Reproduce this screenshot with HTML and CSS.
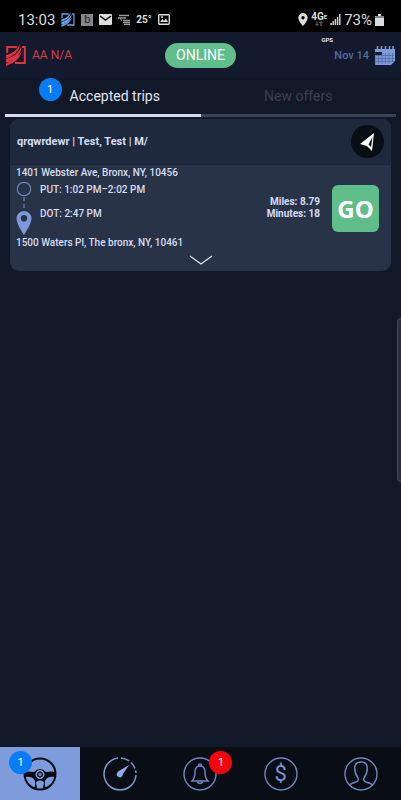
FILE: index.html
```html
<!DOCTYPE html>
<html lang="en">
<head>
<meta charset="utf-8">
<meta name="viewport" content="width=device-width, initial-scale=1">
<title>Accepted trips</title>
<link rel="stylesheet" href="styles.css">
</head>
<body>
<svg class="defs" aria-hidden="true">
  <symbol id="logo" viewBox="0 0 20 22">
    <path d="M1.200 9V3H11M16 3H18.800V19H9" fill="none" stroke="currentColor" stroke-width="2"/>
    <path d="M0 11Q10 9 14 0Q14 8 4 13Q2 14 0 14ZM0 15Q11 12 15.500 3Q15 13 3 18L0 18.500ZM0 22V19.500Q11 15 15.500 8Q14 17 0 22Z" fill="currentColor"/>
  </symbol>
</svg>
<div class="app">
  <div class="status">
    <div class="status-group">
      <span class="clock">13:03</span>
      <svg class="status-logo" viewBox="0 0 20 22"><use href="#logo"/></svg>
      <span class="app-b">b</span>
      <svg width="13" height="11" viewBox="0 0 13 11"><rect width="13" height="11" rx="1" fill="#ddd"/><path d="M1 2L6.500 6L12 2" fill="none" stroke="#111" stroke-width="1.500"/></svg>
      <svg width="12" height="11" viewBox="0 0 12 11"><path d="M1 1.500H11M0 4H8M5 6.500H12M5 8.500H12M6 10.500H12" fill="none" stroke="#999" stroke-width="1.400"/><path d="M2 4L4 7" stroke="#999"/></svg>
      <span class="temp">25°</span>
      <svg width="12" height="11" viewBox="0 0 12 11"><rect x=".7" y=".7" width="10.600" height="9.600" rx="1" fill="none" stroke="#ddd" stroke-width="1.400"/><path d="M2 8L4.500 5L6 7L8 4.500L10 8Z" fill="#ddd"/><circle cx="4" cy="3" r="1" fill="#ddd"/></svg>
    </div>
    <div class="status-group right">
      <svg width="10" height="13" viewBox="0 0 10 13"><path d="M5 0A4.700 4.700 0 0 0 .3 4.700C.3 8 5 13 5 13S9.700 8 9.700 4.700A4.700 4.700 0 0 0 5 0ZM5 3A1.700 1.700 0 1 1 5 6.400A1.700 1.700 0 0 1 5 3Z" fill="#ddd" fill-rule="evenodd"/></svg>
      <span class="network"><span>4G<small>E</small></span><svg width="8" height="5" viewBox="0 0 8 5"><path d="M2 0V4M.5 3L2 4.500L3.500 3M6 5V1M4.500 2L6 .5L7.500 2" fill="none" stroke="#777"/></svg></span>
      <svg width="11" height="11" viewBox="0 0 11 11"><path d="M1 9V11M3.200 7V11M5.400 5V11M7.600 3V11M9.800 0V11" stroke="#ccc" stroke-width="1.500"/></svg>
      <span class="battery">73%</span>
      <svg width="9" height="12" viewBox="0 0 9 12"><path d="M3 0H6V2H9V12H0V2H3Z" fill="#ddd"/><path d="M0 2H9V4H0Z" fill="#888"/></svg>
    </div>
  </div>
  <header class="header">
    <div class="brand"><svg class="brand-logo" viewBox="0 0 20 22"><use href="#logo"/></svg><span>AA N/A</span></div>
    <button class="online">ONLINE</button>
    <button class="date"><span>Nov 14</span>
      <svg width="20" height="19" viewBox="0 0 20 19"><path d="M0 3H20V6H0Z" fill="#7d9bdb"/><path d="M2.500 0V5M6.500 0V5M10.500 0V5M14.500 0V5M18 0V5" stroke="#7d9bdb" stroke-width="1.500"/><path d="M7 6H20V15L16 19H0V9H7Z" fill="#7d9bdb"/><path d="M0 6V19M3.500 9V18M7 7V18M10.500 7V18M14 7V18M17.500 7V16M1 9.500H19M1 12.500H19M1 15.500H19" stroke="#4b639a" stroke-width=".7"/></svg>
    </button>
    <span class="gps">GPS</span>
  </header>
  <nav class="tabs" aria-label="Trips">
    <button class="tab active"><span class="tab-label">Accepted trips<span class="badge tab-badge">1</span></span></button>
    <button class="tab"><span class="tab-label">New offers</span></button>
  </nav>
  <main class="content">
    <article class="trip">
      <div class="trip-head">
        <h1>qrqwrdewr | Test, Test | M/</h1>
        <button class="navigate" aria-label="Navigate"><svg width="17" height="20" viewBox="0 0 17 20"><path d="M1 12L15 1L13 19L8 14Z" fill="#fff"/><path d="M13.500 5L12 15L9.500 12.500Z" fill="#090e15"/></svg></button>
      </div>
      <div class="trip-body">
        <p>1401 Webster Ave, Bronx, NY, 10456</p>
        <div class="route">
          <svg width="16" height="54" viewBox="0 0 16 54"><circle cx="8" cy="8" r="6.700" fill="none" stroke="#7185b5" stroke-width="1.200"/><path d="M8 16V30" stroke="#7d99dc" stroke-dasharray="4 3"/><path d="M8 30A7.500 7.500 0 0 0 .5 37.500C.5 43 8 54 8 54S15.500 43 15.500 37.500A7.500 7.500 0 0 0 8 30ZM8 34A3.200 3.200 0 1 1 8 40.400A3.200 3.200 0 0 1 8 34Z" fill="#7d99dc" fill-rule="evenodd"/></svg>
          <div class="times"><span>PUT: 1:02 PM–2:02 PM</span><span>DOT: 2:47 PM</span></div>
          <div class="stats"><span>Miles: 8.79</span><span>Minutes: 18</span></div>
          <button class="go">GO</button>
        </div>
        <p>1500 Waters Pl, The bronx, NY, 10461</p>
        <button class="expand" aria-label="Show trip details"><svg width="24" height="10" viewBox="0 0 24 10"><path d="M1 1L12 9L23 1" fill="none" stroke="#e0e5f3" stroke-width="1.200"/></svg></button>
      </div>
    </article>
    <span class="edge-handle"></span>
  </main>
  <nav class="bottom" aria-label="Main">
    <button class="nav-item selected" aria-label="Trips"><span class="nav-icon"><svg viewBox="0 0 34 34"><circle cx="17" cy="17" r="15.500" fill="none" stroke="#080d16" stroke-width="2"/><path d="M2 15Q6 14 11 15Q14 12 17 12T23 15Q28 14 32 15V20Q24 19 22 24Q21 28 23 31H11Q13 28 12 24Q10 19 2 20Z" fill="#080d16"/><path d="M13 25Q17 22 21 25L20 31H14Z" fill="#7e9bdc"/><circle cx="17" cy="17.500" r="3.700" fill="#080d16" stroke="#7e9bdc" stroke-width="1.500"/><circle cx="17" cy="17.500" r="1.500" fill="#7e9bdc"/></svg><span class="badge nav-badge-left">1</span></span></button>
    <button class="nav-item" aria-label="Performance"><span class="nav-icon"><svg viewBox="0 0 34 34"><path d="M15 1.100A16 16 0 1 0 33 18M18 1A16 16 0 0 1 26 3.800M28 5.500A16 16 0 0 1 32 11.500M32.600 13.500A16 16 0 0 1 33 16" fill="none" stroke="#8199d3" stroke-width="1.500"/><path d="M26 8L15 14.500Q12 18 15.500 20Q19 21.500 20 17Z" fill="#91a9e1"/></svg></span></button>
    <button class="nav-item" aria-label="Notifications"><span class="nav-icon"><svg viewBox="0 0 34 34"><circle cx="17" cy="17" r="16" fill="none" stroke="#7188bc" stroke-width="1.400"/><path d="M9 24Q12 21 12 15Q12 9 17 9T22 15Q22 21 25 24ZM15.500 9Q15.500 7 17 7T18.500 9M14.500 24Q14.500 26.500 17 26.500T19.500 24" fill="none" stroke="#7188bc" stroke-width="1.400"/></svg><span class="badge nav-badge-right">1</span></span></button>
    <button class="nav-item" aria-label="Earnings"><span class="nav-icon money"><svg viewBox="0 0 34 34"><circle cx="17" cy="17" r="16" fill="none" stroke="#7188bc" stroke-width="1.400"/></svg><span class="dollar">$</span></span></button>
    <button class="nav-item" aria-label="Profile"><span class="nav-icon"><svg viewBox="0 0 34 34"><circle cx="17" cy="17" r="16" fill="none" stroke="#7188bc" stroke-width="1.400"/><path d="M5 28Q8 26 12 25Q15 24 14 21Q10 16 11 9Q12 5 17 5T23 9Q24 16 20 21Q19 24 22 25Q26 26 29 28" fill="none" stroke="#7188bc" stroke-width="1.500"/></svg></span></button>
  </nav>
</div>
</body>
</html>
```
FILE: styles.css
```css
* { box-sizing: border-box; }
body { margin: 0; background: #111827; color: #d6def5; font-family: Roboto, "Noto Sans", sans-serif; }
button { margin: 0; padding: 0; border: 0; background: none; color: inherit; font: inherit; }
svg { display: block; flex: none; }
.defs { position: absolute; width: 0; height: 0; }
.app { min-height: 100vh; display: flex; flex-direction: column; }
.status { height: 32px; padding: 7px 17px 0 18px; background: #000; color: #ddd; display: flex; justify-content: space-between; }
.status-group { display: flex; align-items: center; gap: 6px; }
.clock { font-size: 15px; }
.status-logo { width: 14px; height: 15px; color: #6ba5ed; }
.app-b { width: 12px; height: 12px; background: #888; color: #222; font-size: 11px; line-height: 12px; text-align: center; }
.temp { font-size: 10px; font-weight: 700; }
.right { gap: 3px; }
.network { display: flex; flex-direction: column; align-items: center; font-size: 10px; line-height: 8px; font-weight: 700; }
.network small { font-size: 6px; vertical-align: top; }
.battery { font-size: 15px; }
.header { position: relative; height: 46px; padding: 0 6px; display: grid; grid-template-columns: 1fr auto 1fr; align-items: center; background: #141a2d; }
.brand { display: flex; align-items: center; gap: 6px; color: #d83f45; font-size: 12px; }
.brand-logo { width: 20px; height: 22px; color: #e3343b; }
.online { height: 25px; padding: 0 11px; border-radius: 13px; background: #60be8b; color: #fff; font-size: 14px; }
.date { justify-self: end; display: flex; align-items: center; gap: 6px; color: #566b9c; font-size: 11px; font-weight: 500; }
.gps { position: absolute; right: 68px; top: 4px; color: #fff; font-size: 6px; line-height: 7px; font-weight: 500; }
.tabs { margin: 0 5px; display: grid; grid-template-columns: 1fr 1fr; }
.tab { height: 39px; border-bottom: 3px solid #3b4254; font-size: 14px; color: #3b4152; }
.tab.active { border-color: #d7dbed; color: #e3e5f3; padding-left: 24px; }
.tab-label { position: relative; }
.badge { position: absolute; width: 23px; height: 23px; border-radius: 50%; background: #087cf4; color: #fff; font-size: 11px; font-weight: 400; line-height: 23px; text-align: center; }
.tab-badge { right: 100%; top: -10px; margin-right: 8px; }
.content { flex: 1; position: relative; padding: 2px 10px; }
.trip { overflow: hidden; border-radius: 9px; background: #293347; }
.trip-head { height: 46px; padding: 0 7px; background: #1e293d; border-bottom: 1px solid #1b2437; display: flex; justify-content: space-between; align-items: center; }
h1 { margin: 0; font-size: 11px; font-weight: 700; }
.navigate { width: 33px; height: 33px; border-radius: 50%; background: #090e15; display: grid; place-items: center; }
.trip-body { padding: 1px 6px 0; font-size: 10px; font-weight: 500; line-height: 14px; }
.trip-body p { margin: 0; }
.route { height: 56px; display: flex; align-items: center; }
.times { align-self: flex-start; display: flex; flex-direction: column; gap: 10px; margin: 3px 0 0 8px; }
.stats { margin-left: auto; display: flex; flex-direction: column; text-align: right; line-height: 12px; font-weight: 700; }
.go { width: 47px; height: 47px; margin: 0 6px 0 12px; border-radius: 6px; background: #60be8b; color: #fff; font: 700 24px "Noto Sans", sans-serif; }
.expand { display: block; margin: 5px auto 0; padding-bottom: 6px; }
.edge-handle { position: absolute; right: 0; top: 201px; width: 4px; height: 164px; border: 1px solid #474b5a; border-right: 0; border-radius: 4px 0 0 4px; background: #292d3d; }
.bottom { height: 53px; display: grid; grid-template-columns: repeat(5, 1fr); background: #090d16; }
.nav-item { display: grid; place-items: center; }
.selected { background: #7e9bdc; }
.nav-icon { width: 34px; height: 34px; position: relative; }
.nav-badge-left { left: -14px; top: -6px; }
.nav-badge-right { left: 26px; top: -6px; background: #f3050d; }
.money { display: grid; place-items: center; }
.money > * { grid-area: 1 / 1; }
.dollar { color: #7d95ce; font-size: 22px; line-height: 34px; }
```
